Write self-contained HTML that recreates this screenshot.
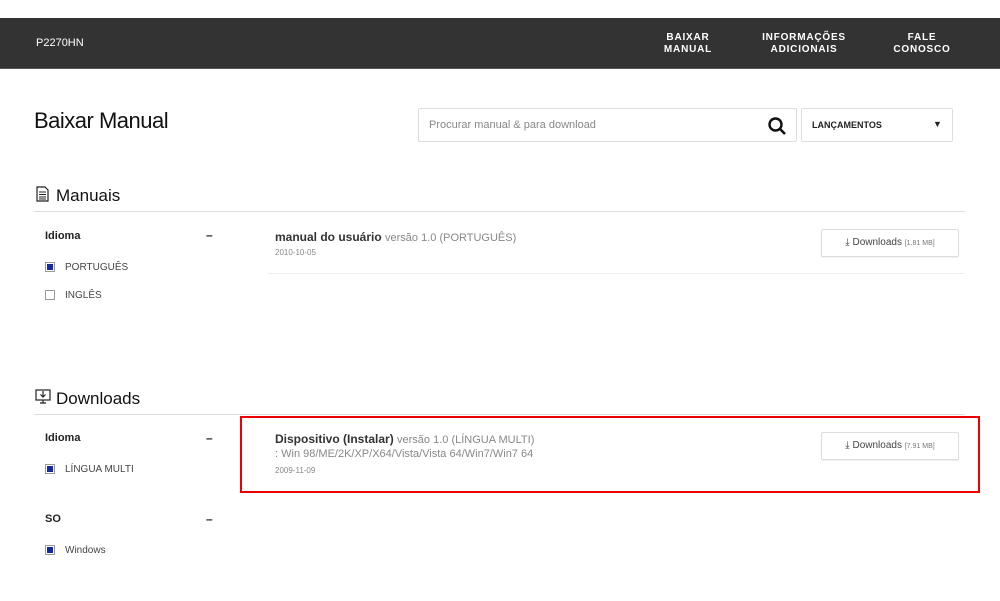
<!DOCTYPE html>
<html><head><meta charset="utf-8"><style>
*{margin:0;padding:0;box-sizing:border-box}
body{width:1000px;height:601px;background:#fff;font-family:"Liberation Sans",sans-serif;color:#222;position:relative;overflow:hidden}
.a{position:absolute;white-space:nowrap}
.nav{position:absolute;left:0;top:18px;width:1000px;height:51px;background:#333;border-bottom:1px solid #555}
.nl{color:#fff;font-size:10px;font-weight:bold;text-align:center;line-height:12px;letter-spacing:.8px}
.cb{position:absolute;width:10px;height:10px;border:1px solid #999;background:#fff}
.cb.on::after{content:"";position:absolute;left:1px;top:1px;width:6px;height:6px;background:#1428a0}
.lab{font-size:10px;color:#444}
.btn{position:absolute;width:138px;height:28px;border:1px solid #ddd;border-radius:2px;font-size:10px;color:#444;text-align:center;line-height:26px;box-shadow:0 1px 1px #eee}
.btn small{font-size:7px;color:#777}
.hr{position:absolute;height:1px;background:#ddd}
</style></head><body>
<div class="nav"></div>
<div class="a" style="left:36px;top:37px;color:#fff;font-size:11px">P2270HN</div>
<div class="a nl" style="left:660px;top:32px;width:56px">BAIXAR<br>MANUAL</div>
<div class="a nl" style="left:760px;top:32px;width:88px">INFORMAÇÕES<br>ADICIONAIS</div>
<div class="a nl" style="left:890px;top:32px;width:64px">FALE<br>CONOSCO</div>

<div class="a" style="left:34px;top:108px;font-size:22px;color:#111;letter-spacing:-.5px">Baixar Manual</div>
<div class="a" style="left:418px;top:108px;width:379px;height:34px;border:1px solid #ddd;border-radius:2px"></div>
<div class="a" style="left:429px;top:119px;font-size:11px;color:#888">Procurar manual &amp; para download</div>
<svg class="a" style="left:767px;top:116px" width="20" height="20" viewBox="0 0 20 20"><circle cx="8.5" cy="8.5" r="6" fill="none" stroke="#111" stroke-width="2.4"/><path d="M13 13l5 5" stroke="#111" stroke-width="2.6"/></svg>
<div class="a" style="left:801px;top:108px;width:152px;height:34px;border:1px solid #ddd;border-radius:2px"></div>
<div class="a" style="left:812px;top:120px;font-size:9px;font-weight:bold;color:#222">LANÇAMENTOS</div>
<div class="a" style="left:933px;top:119px;font-size:9px">▼</div>

<svg class="a" style="left:36px;top:186px" width="13" height="16" viewBox="0 0 13 16"><path d="M1 1h8l3 3v11H1z" fill="none" stroke="#222" stroke-width="1.2"/><path d="M3 6h7M3 8.5h7M3 11h7M3 13h7" stroke="#222" stroke-width="1"/></svg>
<div class="a" style="left:56px;top:186px;font-size:17px;color:#111">Manuais</div>
<div class="hr" style="left:34px;top:211px;width:931px"></div>
<div class="a" style="left:45px;top:230px;font-size:11px;font-weight:bold">Idioma</div>
<div class="a" style="left:206px;top:228px;font-size:12px;font-weight:bold">–</div>
<div class="cb on" style="left:45px;top:262px"></div><div class="a lab" style="left:65px;top:262px">PORTUGUÊS</div>
<div class="cb" style="left:45px;top:290px"></div><div class="a lab" style="left:65px;top:290px">INGLÊS</div>
<div class="a" style="left:275px;top:230px;font-size:12px"><b style="color:#333">manual do usuário</b> <span style="color:#888;font-size:11px">versão 1.0 (PORTUGUÊS)</span></div>
<div class="a" style="left:275px;top:248px;font-size:8px;color:#888">2010-10-05</div>
<div class="btn" style="left:821px;top:229px">⤓ Downloads <small>[1.81 MB]</small></div>
<div class="hr" style="left:268px;top:273px;width:697px;background:#eee"></div>

<svg class="a" style="left:35px;top:389px" width="16" height="15" viewBox="0 0 16 15"><rect x="1" y="1" width="14" height="10" fill="none" stroke="#222" stroke-width="1.2"/><path d="M8 2v6M5.5 5.5L8 8l2.5-2.5M5 14h6M8 11v3" stroke="#222" stroke-width="1.2" fill="none"/></svg>
<div class="a" style="left:56px;top:389px;font-size:17px;color:#111">Downloads</div>
<div class="hr" style="left:34px;top:414px;width:931px"></div>
<div class="a" style="left:240px;top:416px;width:740px;height:77px;border:2px solid #e00"></div>
<div class="a" style="left:45px;top:432px;font-size:11px;font-weight:bold">Idioma</div>
<div class="a" style="left:206px;top:431px;font-size:12px;font-weight:bold">–</div>
<div class="cb on" style="left:45px;top:464px"></div><div class="a lab" style="left:65px;top:464px">LÍNGUA MULTI</div>
<div class="a" style="left:45px;top:513px;font-size:11px;font-weight:bold">SO</div>
<div class="a" style="left:206px;top:512px;font-size:12px;font-weight:bold">–</div>
<div class="cb on" style="left:45px;top:545px"></div><div class="a lab" style="left:65px;top:545px">Windows</div>
<div class="a" style="left:275px;top:432px;font-size:12px"><b style="color:#333">Dispositivo (Instalar)</b> <span style="color:#888;font-size:11px">versão 1.0 (LÍNGUA MULTI)</span></div>
<div class="a" style="left:275px;top:448px;font-size:11px;color:#888">: Win 98/ME/2K/XP/X64/Vista/Vista 64/Win7/Win7 64</div>
<div class="a" style="left:275px;top:466px;font-size:8px;color:#888">2009-11-09</div>
<div class="btn" style="left:821px;top:432px">⤓ Downloads <small>[7.91 MB]</small></div>
</body></html>
